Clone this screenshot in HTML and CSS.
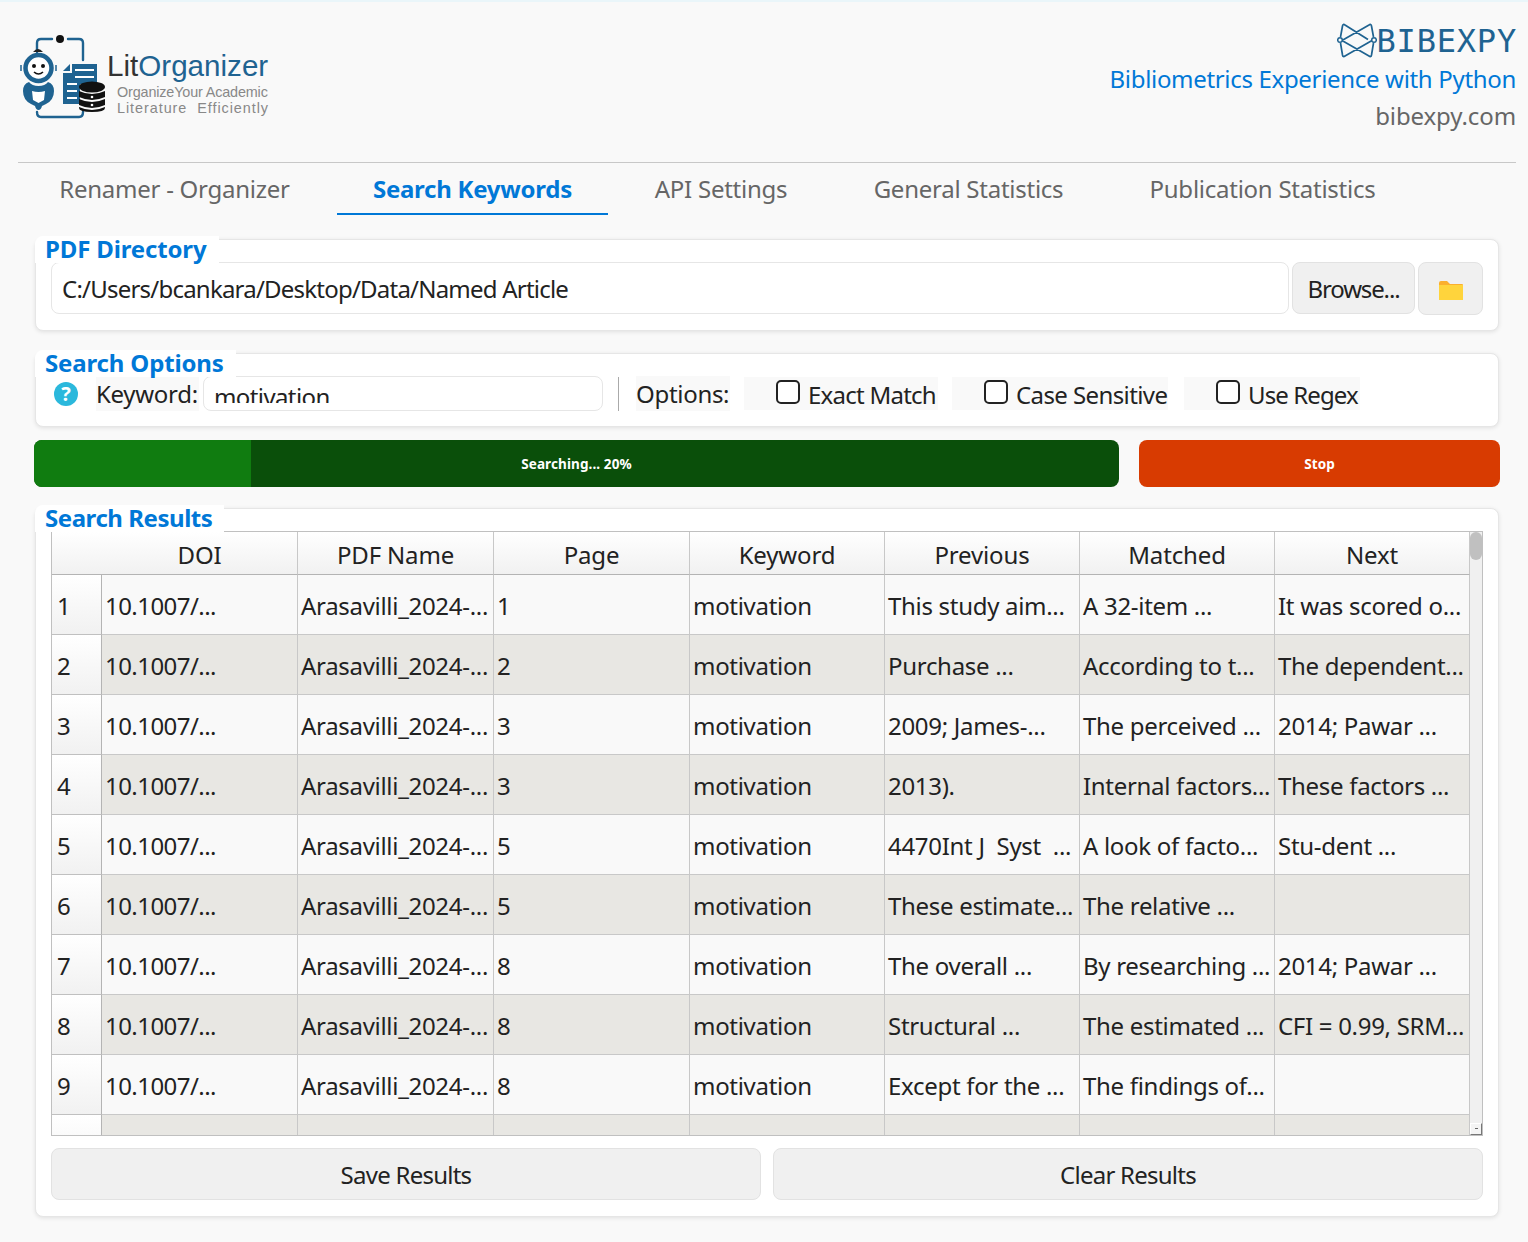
FILE: index.html
```html
<!DOCTYPE html>
<html lang="en">
<head>
<meta charset="utf-8">
<title>LitOrganizer</title>
<link rel="stylesheet" href="styles.css">
</head>
<body>
<header class="header">
  <div class="logo">
    <svg class="logo-icon" viewBox="18 33 90 90" width="90" height="90">
      <path d="M37 52V43q0-4 4-4H52M68 39H79q4 0 4 4V60M37 112q0 5 4 5H79q4 0 4-5" fill="none" stroke="#1f6391" stroke-width="2.4" stroke-linecap="round"/>
      <circle cx="60" cy="39" r="4" fill="#111"/>
      <path d="M33 52q5-6 10 0z" fill="#222"/>
      <circle cx="38.500" cy="68" r="13" fill="#fff" stroke="#1f6391" stroke-width="4.500"/>
      <path d="M21 65v6M56 65v6" stroke="#1f6391" stroke-width="1.500"/>
      <circle cx="34" cy="66" r="2" fill="#111"/><circle cx="43" cy="66" r="2" fill="#111"/>
      <path d="M34 72q4.500 4 9 0" fill="none" stroke="#111" stroke-width="1.600"/>
      <path d="M29 82q-6 2-6 9 0 9 8 13l4 2q1 4 3.500 4t3.500-4l4-2q8-4 8-13 0-7-6-9-3 4-9.500 4T29 82z" fill="#1f6391"/>
      <path d="M32 91q6.500 2 13 0l-1 9-5.500 3-5.500-3z" fill="#fff"/>
      <path d="M72 64H97V84H80V104H63V73h9z" fill="#1f6391"/>
      <path d="M70 64v7h-7z" fill="#1f6391"/>
      <path d="M75 70H94M75 77H94M67 84H77M67 91H77M67 98H77" stroke="#fff" stroke-width="2"/>
      <ellipse cx="92" cy="87" rx="13" ry="5.500" fill="#111"/>
      <path d="M79 91q13 6 26 0v6q-13 6-26 0zM79 99q13 6 26 0v6q-13 6-26 0z" fill="#111"/>
      <path d="M79 107q13 6 26 0v1q0 4-13 4t-13-4z" fill="#111"/>
      <circle cx="92" cy="97" r="1.300" fill="#fff"/><circle cx="92" cy="105" r="1.300" fill="#fff"/>
    </svg>
    <div class="logo-text">
      <div class="logo-name"><span class="logo-lit">Lit</span><span class="logo-org">Organizer</span></div>
      <div class="logo-sub">OrganizeYour Academic</div>
      <div class="logo-sub logo-sub-wide">Literature&nbsp; Efficiently</div>
    </div>
  </div>
  <div class="brand">
    <div class="brand-row">
      <svg class="brand-icon" viewBox="1336 21 40 38" width="40" height="38">
        <path d="M1339.500 36 1341.500 25Q1342 22.500 1344 24L1367 38.500M1372.500 36 1370.500 25Q1370 22.500 1368 24L1341 39.500 1368 55Q1370 56.500 1370.500 54L1372.500 42M1339.500 42 1341.500 54Q1342 56.500 1344 55L1371 39.500" fill="none" stroke="#1f6391" stroke-width="1.700" stroke-linejoin="round"/>
        <circle cx="1339" cy="39" r="2.300" fill="#fafafa" stroke="#1f6391" stroke-width="1.500"/>
        <circle cx="1373" cy="39" r="2.300" fill="#fafafa" stroke="#1f6391" stroke-width="1.500"/>
      </svg>
      <span class="brand-name">BIBEXPY</span>
    </div>
    <div class="brand-tag">Bibliometrics Experience with Python</div>
    <div class="brand-url">bibexpy.com</div>
  </div>
</header>

<nav class="tabs">
  <div class="tab">Renamer - Organizer</div>
  <div class="tab tab-active">Search Keywords</div>
  <div class="tab">API Settings</div>
  <div class="tab">General Statistics</div>
  <div class="tab">Publication Statistics</div>
</nav>

<main class="content">
  <section class="card card-dir">
    <div class="legend">PDF Directory</div>
    <div class="dir-row">
      <div class="field dir-field">C:/Users/bcankara/Desktop/Data/Named Article</div>
      <div class="btn browse-btn">Browse...</div>
      <div class="btn folder-btn">
        <svg viewBox="0 0 26 22" width="26" height="22"><path d="M1 4q0-2 2-2h6l3 3h12q1 0 1 1v3H1z" fill="#fbaf2e"/><path d="M1 6h24v15H1z" fill="#ffd43c"/></svg>
      </div>
    </div>
  </section>

  <section class="card card-opts">
    <div class="legend">Search Options</div>
    <div class="opts-row">
      <svg class="help" viewBox="0 0 26 26" width="26" height="26"><circle cx="13" cy="13" r="12" fill="#2bb8dc"/><text x="13" y="20" class="help-q">?</text></svg>
      <span class="lbl kw-lbl">Keyword:</span>
      <div class="kw-input"><span class="kw-text">motivation</span></div>
      <span class="vsep"></span>
      <span class="lbl opt-lbl">Options:</span>
      <label class="chk chk-exact"><span class="box"></span>Exact Match</label>
      <label class="chk chk-case"><span class="box"></span>Case Sensitive</label>
      <label class="chk chk-regex"><span class="box"></span>Use Regex</label>
    </div>
  </section>

  <div class="progress-row">
    <div class="progress"><div class="progress-fill" style="width:20%"></div><span class="progress-text">Searching... 20%</span></div>
    <div class="stop">Stop</div>
  </div>

  <section class="card card-results">
    <div class="legend legend-results">Search Results</div>
    <div class="table-wrap">
      <div class="table-clip">
        <table class="grid">
          <colgroup><col class="c0"><col class="c1"><col class="c1"><col class="c1"><col class="c2"><col class="c2"><col class="c2"><col class="c2"></colgroup>
          <thead>
            <tr><th class="corner"></th><th class="doi-h">DOI</th><th>PDF Name</th><th>Page</th><th>Keyword</th><th>Previous</th><th>Matched</th><th>Next</th></tr>
          </thead>
          <tbody>
            <tr><th>1</th><td>10.1007/...</td><td>Arasavilli_2024-...</td><td>1</td><td>motivation</td><td>This study aim...</td><td>A 32-item ...</td><td>It was scored o...</td></tr>
            <tr><th>2</th><td>10.1007/...</td><td>Arasavilli_2024-...</td><td>2</td><td>motivation</td><td>Purchase ...</td><td>According to t...</td><td>The dependent...</td></tr>
            <tr><th>3</th><td>10.1007/...</td><td>Arasavilli_2024-...</td><td>3</td><td>motivation</td><td>2009; James-...</td><td>The perceived ...</td><td>2014; Pawar ...</td></tr>
            <tr><th>4</th><td>10.1007/...</td><td>Arasavilli_2024-...</td><td>3</td><td>motivation</td><td>2013).</td><td>Internal factors...</td><td>These factors ...</td></tr>
            <tr><th>5</th><td>10.1007/...</td><td>Arasavilli_2024-...</td><td>5</td><td>motivation</td><td>4470Int J&nbsp; Syst&nbsp; ...</td><td>A look of facto...</td><td>Stu-dent ...</td></tr>
            <tr><th>6</th><td>10.1007/...</td><td>Arasavilli_2024-...</td><td>5</td><td>motivation</td><td>These estimate...</td><td>The relative ...</td><td></td></tr>
            <tr><th>7</th><td>10.1007/...</td><td>Arasavilli_2024-...</td><td>8</td><td>motivation</td><td>The overall ...</td><td>By researching ...</td><td>2014; Pawar ...</td></tr>
            <tr><th>8</th><td>10.1007/...</td><td>Arasavilli_2024-...</td><td>8</td><td>motivation</td><td>Structural ...</td><td>The estimated ...</td><td>CFI = 0.99, SRM...</td></tr>
            <tr><th>9</th><td>10.1007/...</td><td>Arasavilli_2024-...</td><td>8</td><td>motivation</td><td>Except for the ...</td><td>The findings of...</td><td></td></tr>
            <tr><th></th><td></td><td></td><td></td><td></td><td></td><td></td><td></td></tr>
          </tbody>
        </table>
      </div>
      <div class="vscroll"><div class="thumb"></div><div class="grip"></div></div>
    </div>
    <div class="action-row">
      <div class="btn action-btn">Save Results</div>
      <div class="btn action-btn">Clear Results</div>
    </div>
  </section>
</main>
</body>
</html>
```
FILE: styles.css
```css
* { box-sizing: border-box; }
html, body { margin: 0; padding: 0; }
body {
  width: 1528px;
  height: 1242px;
  overflow: hidden;
  background: #f9f9f9;
  border-top: 2px solid #eaf6fa;
  color: #222;
  font-family: "Noto Sans", "Open Sans", sans-serif;
  font-size: 24px;
  letter-spacing: -0.6px;
}
.header {
  height: 161px;
  margin: 0 12px 0 18px;
  border-bottom: 1px solid #c8c8c8;
  display: flex;
  justify-content: space-between;
}
.logo { display: flex; align-items: flex-start; padding-top: 31px; }
.logo-icon { flex: none; }
.logo-text { margin: 15px 0 0 -1px; font-family: "Liberation Sans", Arial, sans-serif; letter-spacing: 0; }
.logo-name { font-size: 29.600px; line-height: 36px; }
.logo-lit { color: #333; }
.logo-org { color: #1f6391; }
.logo-sub { margin-left: 10px; font-size: 14.400px; line-height: 16px; color: #888; letter-spacing: -0.15px; white-space: nowrap; }
.logo-sub-wide { letter-spacing: 0.95px; }
.brand { display: flex; flex-direction: column; align-items: flex-end; padding-top: 19px; }
.brand-row { display: flex; align-items: center; height: 40px; }
.brand-icon { flex: none; }
.brand-name { font-family: "DejaVu Sans Mono", monospace; font-size: 32px; letter-spacing: 0.8px; color: #1f6391; margin-right: -1px; }
.brand-tag { margin-top: 0; font-size: 24px; line-height: 36px; letter-spacing: -0.32px; color: #0078d7; }
.brand-url { margin-top: 1px; font-size: 24px; line-height: 36px; letter-spacing: -0.1px; color: #666; }
.tabs {
  margin-left: 12px;
  height: 52px;
  display: grid;
  grid-template-columns: 325px 271px 226px 269px 319px;
  justify-content: start;
  letter-spacing: -0.25px;
}
.tab { display: flex; align-items: center; justify-content: center; color: #666; white-space: nowrap; padding-bottom: 2px; }
.tab-active { color: #0078d7; font-weight: 700; border-bottom: 2px solid #0078d7; padding-bottom: 0; }
.content { padding: 24px 28px 0 34px; display: flex; flex-direction: column; }
.card {
  position: relative;
  margin: 0 1px;
  background: #fff;
  border: 1px solid #e6e6e6;
  border-radius: 8px;
  box-shadow: 0 1px 4px rgba(0,0,0,.1);
  padding: 22px 15px 16px;
}
.legend {
  position: absolute;
  left: -1px;
  top: -4px;
  padding: 0 12px 0 10px;
  height: 27px;
  line-height: 26px;
  background: #fff;
  color: #0078d7;
  font-weight: 700;
  letter-spacing: -0.15px;
  white-space: nowrap;
  border-radius: 8px 0 0 0;
}
.legend-results { letter-spacing: -0.45px; }
.btn {
  display: flex;
  align-items: center;
  justify-content: center;
  background: #f0f0f0;
  border: 1px solid #e2e2e2;
  border-radius: 8px;
}
.card-dir { height: 92px; }
.dir-row { display: flex; align-items: flex-start; gap: 3px; }
.field {
  flex: 1;
  height: 52px;
  padding-left: 10px;
  display: flex;
  align-items: center;
  border: 1px solid #e6e6e6;
  border-radius: 8px;
  letter-spacing: -0.78px;
}
.browse-btn { width: 123px; height: 52px; flex: none; letter-spacing: -1.15px; }
.folder-btn { width: 65px; height: 53px; flex: none; padding-top: 2px; }
.card-opts { margin-top: 22px; height: 74px; }
.opts-row { display: flex; align-items: center; height: 35px; }
.help { flex: none; margin-left: 2px; }
.help-q { font-size: 20px; font-weight: 700; fill: #fff; text-anchor: middle; letter-spacing: 0; }
.lbl { background: #f9f9f9; height: 35px; line-height: 36px; white-space: nowrap; letter-spacing: -0.3px; }
.kw-lbl { margin-left: 17px; width: 103px; }
.kw-input {
  width: 400px;
  height: 35px;
  margin-left: 4px;
  border: 1px solid #e6e6e6;
  border-radius: 8px;
  padding-left: 10px;
  background: #fff;
}
.kw-text { display: block; height: 26px; overflow: hidden; line-height: 39px; }
.vsep { width: 1px; height: 34px; margin-left: 15px; background: #aaa; }
.opt-lbl { margin-left: 17px; width: 94px; }
.chk {
  display: flex;
  align-items: center;
  height: 33px;
  background: #f9f9f9;
  white-space: nowrap;
  font-size: 24px;
  letter-spacing: -0.75px;
  padding-top: 2px;
}
.chk-exact { margin-left: 14px; width: 194px; padding-left: 32px; }
.chk-case { margin-left: 14px; width: 216px; padding-left: 32px; letter-spacing: -0.6px; }
.chk-regex { margin-left: 16px; width: 176px; padding-left: 32px; letter-spacing: -0.9px; }
.box {
  flex: none;
  width: 24px;
  height: 24px;
  margin: -6px 8px 0 0;
  border: 2px solid #222;
  border-radius: 5px;
  background: #fff;
}
.progress-row { display: flex; gap: 20px; margin-top: 13px; height: 47px; }
.progress {
  position: relative;
  width: 1085px;
  background: #0a4f0a;
  border-radius: 8px;
  overflow: hidden;
  display: flex;
  align-items: center;
  justify-content: center;
}
.progress-fill { position: absolute; left: 0; top: 0; bottom: 0; background: #107c10; }
.progress-text, .stop { position: relative; color: #fff; font-size: 13.500px; font-weight: 700; letter-spacing: 0.1px; }
.stop {
  width: 361px;
  background: #d83b01;
  border-radius: 8px;
  display: flex;
  align-items: center;
  justify-content: center;
}
.card-results { margin-top: 21px; height: 709px; }
.table-wrap {
  display: flex;
  height: 605px;
  border: 1px solid #c0c0c0;
}
.table-clip { width: 1418px; overflow: hidden; flex: none; }
.grid { border-collapse: separate; border-spacing: 0; table-layout: fixed; width: 1418px; letter-spacing: -0.3px; }
.c0 { width: 50px; }
.c1 { width: 196px; }
.c2 { width: 195px; }
.grid th, .grid td { padding: 0; font-weight: 400; white-space: nowrap; overflow: hidden; }
.grid thead th {
  height: 43px;
  padding-top: 3px;
  text-align: center;
  background: linear-gradient(#fff, #f1f1f1);
  border-right: 1px solid #c8c8c8;
  border-bottom: 1px solid #b4b4b4;
  line-height: 39px;
  letter-spacing: -0.15px;
}
.grid thead th.corner { border-right: none; }
.grid tbody th {
  height: 60px;
  text-align: left;
  padding: 2px 0 0 5px;
  background: linear-gradient(#fff, #f1f1f1);
  border-right: 1px solid #b4b4b4;
  border-bottom: 1px solid #c0c0c0;
}
.grid tbody td {
  padding: 2px 0 0 3px;
  background: #f9f9f9;
  border-right: 1px solid #c8c8c8;
  border-bottom: 1px solid #c8c8c8;
}
.grid tbody td:nth-child(2) { letter-spacing: -0.55px; }
.grid tbody tr:nth-child(even) td { background: #e8e7e3; }
.vscroll { position: relative; flex: 1; background: #f0f0f0; }
.thumb { position: absolute; left: 0; right: 0; top: 0; height: 28px; background: #c0c0c0; border-radius: 6px; }
.grip {
  position: absolute;
  left: 0;
  right: 0;
  bottom: 0;
  height: 12px;
  background: #f4f4f4;
  border: 1px solid #fff;
  border-right-color: #777;
  border-bottom-color: #777;
}
.grip::after {
  content: "";
  position: absolute;
  left: 4px;
  top: 4px;
  width: 3px;
  height: 1px;
  background: #666;
}
.action-row { display: flex; gap: 12px; margin-top: 12px; letter-spacing: -0.75px; }
.action-btn { flex: 1; height: 52px; }
```
